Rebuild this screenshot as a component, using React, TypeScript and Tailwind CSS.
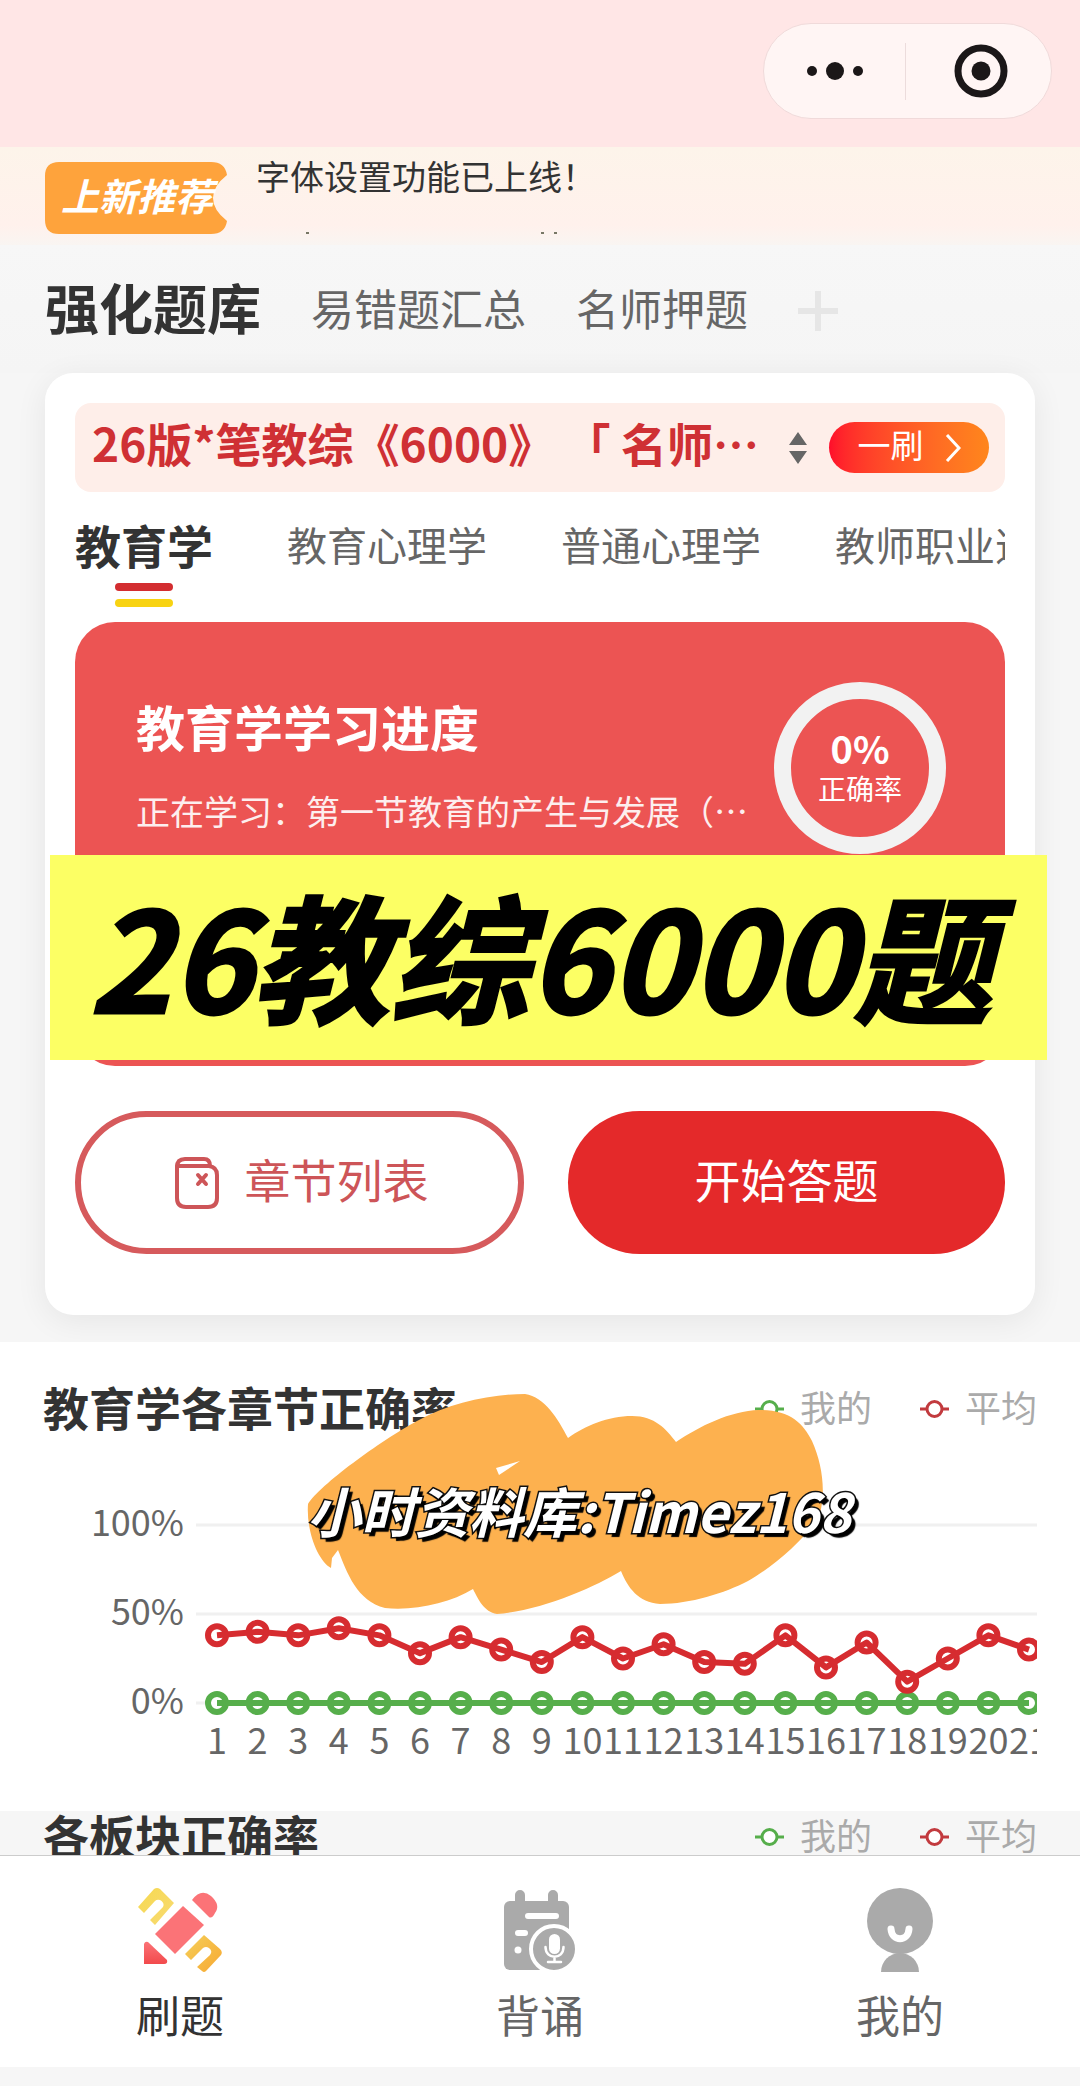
import { useState } from "react";

const bankTabs = ["强化题库", "易错题汇总", "名师押题"];
const subjects = ["教育学", "教育心理学", "普通心理学", "教师职业道德"];

// 平均正确率 (%)
const average = [
  38, 40, 38, 42, 38, 28, 37, 30, 23, 37, 25, 33, 23, 22, 38, 20, 34, 12, 25,
  38, 30,
];

const CHART_LEFT = 174;
const CHART_STEP = 40.6;
const CHART_ZERO = 264;

const pointX = (index: number) => CHART_LEFT + index * CHART_STEP;
const pointY = (value: number) => CHART_ZERO - value * 1.78;

const Series = ({ values, color }: { values: number[]; color: string }) => (
  <g stroke={color} strokeWidth={6} fill="none">
    {values.map((value, i) => (
      <circle key={i} cx={pointX(i)} cy={pointY(value)} r={9} fill="#fff" />
    ))}
    <polyline
      strokeLinejoin="round"
      points={values.map((value, i) => `${pointX(i)},${pointY(value)}`).join(" ")}
    />
  </g>
);

const AccuracyChart = () => (
  <svg className="block w-full h-[372px] mt-[10px]" role="img" aria-label="各章节正确率">
    {[100, 50, 0].map((tick) => (
      <g key={tick}>
        <line x1={153} x2="100%" y1={pointY(tick)} y2={pointY(tick)} stroke="#f0f0f0" strokeWidth={3} />
        <text x={141} y={pointY(tick) + 11} textAnchor="end" fontSize={36} fill="#666">
          {tick}%
        </text>
      </g>
    ))}
    <Series values={average.map(() => 0)} color="#56ae4b" />
    <Series values={average} color="#d62c30" />
    {average.map((_, i) => (
      <text key={i} x={pointX(i)} y={315} textAnchor="middle" fontSize={36} fill="#666">
        {i + 1}
      </text>
    ))}
  </svg>
);

const LegendItem = ({ label, color }: { label: string; color: string }) => (
  <span className="flex items-center gap-4">
    <svg width="29" height="26" fill="none" stroke={color} strokeWidth={3}>
      <path d="M0 16h6M23 16h6" />
      <circle cx="14.5" cy="16" r="7.5" fill="#fff" />
    </svg>
    {label}
  </span>
);

const SectionTitle = ({ title }: { title: string }) => (
  <div className="flex items-center justify-between h-[46px]">
    <h2 className="text-[46px] leading-[46px] font-bold text-[#333]">{title}</h2>
    <div className="flex gap-12 text-[36px] leading-[46px] text-[#aaa]">
      <LegendItem label="我的" color="#56ae4b" />
      <LegendItem label="平均" color="#c23a3e" />
    </div>
  </div>
);

const PracticeIcon = () => (
  <svg width="84" height="84" viewBox="138 1888 84 84">
    <defs>
      <linearGradient id="gold" x1="0" y1="0" x2="1" y2="1">
        <stop offset="0" stopColor="#f6d94f" />
        <stop offset="1" stopColor="#f8da74" />
      </linearGradient>
      <linearGradient id="amber" x1="0" y1="0" x2="1" y2="1">
        <stop offset="0" stopColor="#f5cf5a" />
        <stop offset="1" stopColor="#f7a832" />
      </linearGradient>
      <linearGradient id="tip" x1="0" y1="0" x2="0" y2="1">
        <stop offset="0" stopColor="#fb7377" />
        <stop offset="1" stopColor="#f24a4c" />
      </linearGradient>
    </defs>
    <path fill="url(#gold)" d="M138 1907L154 1889Q157 1887 160 1889L174 1903L155 1925L150 1920L163 1907Q165 1903 160 1900Q157 1899 155 1901L144 1913Z" />
    <path fill="url(#amber)" d="M185 1954L204 1935L220 1949Q223 1952 221 1955L206 1971Q204 1973 202 1971L197 1967L210 1955Q213 1951 209 1948Q206 1946 203 1948L191 1960Z" />
    <path fill="#fb7377" d="M183 1906L204 1925L175 1954L155 1934Z" />
    <path fill="#fb7377" d="M192 1900Q201 1888 211 1896Q221 1905 215 1913Q212 1919 209 1917Z" />
    <path fill="url(#tip)" d="M144 1944Q145 1941 148 1942L167 1960Q168 1964 164 1964H144Z" />
  </svg>
);

const ReciteIcon = () => (
  <svg width="84" height="84" viewBox="498 1888 84 84">
    <path stroke="#aaa" strokeWidth={10} strokeLinecap="round" d="M520 1895V1906M553 1895V1906" />
    <rect x="504" y="1901" width="65" height="69" rx="6" fill="#aaa" />
    <path stroke="#fff" strokeWidth={6} strokeLinecap="round" d="M528 1916H556M518 1933H525" />
    <circle cx="518" cy="1950" r="3.5" fill="#fff" />
    <circle cx="554" cy="1949" r="23" fill="#aaa" stroke="#fff" strokeWidth={4} />
    <rect x="549" y="1934" width="11" height="20" rx="5.5" fill="#fff" />
    <path fill="none" stroke="#fff" strokeWidth={2.5} strokeLinecap="round" d="M545.5 1947C545.5 1960 563.5 1960 563.5 1947M554.5 1957V1962M548 1962H561" />
  </svg>
);

const MineIcon = () => (
  <svg width="84" height="84" viewBox="858 1888 84 84">
    <circle cx="900" cy="1921" r="33" fill="#aaa" />
    <path fill="#aaa" d="M881 1972A19 19 0 0 1 919 1972Z" />
    <path fill="none" stroke="#fff" strokeWidth={7} strokeLinecap="round" d="M891 1929C892 1942 908 1942 909 1929" />
  </svg>
);

const navItems = [
  { label: "刷题", icon: <PracticeIcon />, color: "text-[#333]" },
  { label: "背诵", icon: <ReciteIcon />, color: "text-[#666]" },
  { label: "我的", icon: <MineIcon />, color: "text-[#666]" },
];

const App = () => {
  const [bank, setBank] = useState(0);
  const [subject, setSubject] = useState(0);

  return (
    <div
      lang="zh-CN"
      className="flex flex-col h-screen overflow-hidden bg-[#f6f6f6] font-['Noto_Sans_CJK_SC',sans-serif]"
    >
      <header className="shrink-0 flex justify-end items-start h-[147px] pt-[23px] pr-7 bg-[#ffe6e6]">
        <div className="flex items-center w-[289px] h-[96px] rounded-full border border-[#f0dada] bg-[#fff5f4]">
          <button aria-label="更多" className="flex-1 flex justify-center">
            <svg width="56" height="20" fill="#1b1718">
              <circle cx="5" cy="10" r="5" />
              <circle cx="28" cy="10" r="9" />
              <circle cx="51" cy="10" r="5" />
            </svg>
          </button>
          <span className="w-px h-[57px] bg-[#ecdcdc]" />
          <button aria-label="关闭" className="flex-1 flex justify-center pl-1">
            <svg width="54" height="54" fill="none" stroke="#1b1718">
              <circle cx="27" cy="27" r="23" strokeWidth={7} />
              <circle cx="27" cy="27" r="9.5" fill="#1b1718" stroke="none" />
            </svg>
          </button>
        </div>
      </header>

      <main className="flex-1 min-h-0 overflow-hidden">
        {/* 公告 */}
        <div className="flex items-start gap-[29px] h-[98px] px-[45px] pt-[15px] bg-linear-to-b from-[#fdf4ea] via-[#fff1ec] via-80% to-[#f9f5f2]">
          <div className="relative w-[182px] h-[72px]">
            <svg width="182" height="72" className="block">
              <path fill="#fea33c" d="M14 0H166Q180 0 182 13Q168 24 168 36Q168 48 182 59Q180 72 166 72H14Q0 72 0 58V14Q0 0 14 0Z" />
            </svg>
            <span className="absolute inset-0 pl-4 text-[38px] leading-[66px] font-bold italic text-white whitespace-nowrap">
              上新推荐
            </span>
          </div>
          <div className="text-[34px] leading-[28px] text-[#333]">
            <p>字体设置功能已上线！</p>
            <svg width="310" height="44" fill="#776">
              <path d="M50 42h3v2h-3zM285 42h3v2h-3zM298 42h3v2h-3z" />
            </svg>
          </div>
        </div>

        <div className="flex items-center h-[128px] px-[45px] pb-1 gap-[50px] bg-linear-to-b from-[#f7f7f7] to-[#f5f5f5]">
          {bankTabs.map((tab, i) => (
            <button
              key={tab}
              onClick={() => setBank(i)}
              className={
                bank === i
                  ? "text-[54px] leading-[64px] font-bold text-[#333]"
                  : "text-[43px] leading-[64px] text-[#666]"
              }
            >
              {tab}
            </button>
          ))}
          <button aria-label="添加">
            <svg width="40" height="48" stroke="#e6e6e6" strokeWidth={6}>
              <path d="M20 8V48M0 28H40" />
            </svg>
          </button>
        </div>

        <div className="px-[45px] pb-[27px]">
          <div className="relative px-[30px] pt-[30px] pb-[61px] rounded-[28px] bg-white shadow-[0_6px_32px_rgba(0,0,0,0.07)]">
            <div className="flex items-center h-[89px] pl-[17px] pr-4 rounded-2xl bg-[#feeee9]">
              <button className="flex-1 min-w-0 flex items-center justify-between pr-[22px]">
                <span className="pb-3 text-[46px] leading-[60px] font-bold text-[#cf3034] whitespace-nowrap">
                  26版*笔教综《6000》 「 名师…
                </span>
                <svg width="18" height="32" fill="#666">
                  <path d="M9 0L18 13H0ZM9 32L18 19H0Z" />
                </svg>
              </button>
              <button className="flex items-center justify-center gap-[21px] w-[160px] h-[51px] rounded-full bg-linear-to-r from-[#ff0b2b] to-[#ff861c] text-[33px] leading-[42px] text-white">
                <span className="pb-2">一刷</span>
                <svg width="16" height="28" fill="none" stroke="#fff" strokeWidth={3}>
                  <path d="M2 1L14 14L2 27" />
                </svg>
              </button>
            </div>

            <div className="flex items-start gap-[74px] h-[130px] pt-[22px] overflow-hidden">
              {subjects.map((name, i) => (
                <button
                  key={name}
                  onClick={() => setSubject(i)}
                  className="shrink-0 flex flex-col items-center"
                >
                  <span
                    className={
                      subject === i
                        ? "text-[46px] leading-[60px] font-bold text-[#333]"
                        : "text-[40px] leading-[60px] text-[#666]"
                    }
                  >
                    {name}
                  </span>
                  {subject === i && (
                    <>
                      <span className="mt-[9px] w-[58px] h-2 rounded-full bg-[#d32d30]" />
                      <span className="mt-2 w-[58px] h-2 rounded-full bg-[#f8d312]" />
                    </>
                  )}
                </button>
              ))}
            </div>

            <div className="flex items-start justify-between h-[444px] pl-[61px] pr-[59px] rounded-[40px] bg-[#ec5453] text-white">
              <div className="pt-[74px] whitespace-nowrap">
                <h1 className="text-[49px] leading-[60px] font-bold">教育学学习进度</h1>
                <p className="mt-[30px] text-[34px] leading-[50px] text-[#fdeeee]">
                  正在学习：第一节教育的产生与发展（…
                </p>
              </div>
              <div className="shrink-0 mt-[60px] flex flex-col items-center justify-center size-[172px] rounded-full border-[17px] border-[#f2f2f2]">
                <strong className="text-[38px] leading-[40px]">0%</strong>
                <span className="text-[28px] leading-[40px]">正确率</span>
              </div>
            </div>

            <div className="grid grid-cols-[449fr_437fr] gap-[44px] mt-[45px] h-[143px] text-[46px]">
              <button className="flex items-center justify-center gap-[26px] pl-1 rounded-full border-[6px] border-[#d65a5c] text-[#cd5558]">
                <svg width="44" height="52" viewBox="0 0 44 52" fill="none" stroke="#cd5558" strokeWidth={4} strokeLinecap="round">
                  <path d="M2 10Q2 2 10 2H29Q35 2 35 9" />
                  <path d="M2 9H34Q42 10 42 18V41Q42 50 33 50H11Q2 50 2 41V9" />
                  <path d="M23 18L31 27M31 18L23 27" />
                </svg>
                <span className="pb-2">章节列表</span>
              </button>
              <button className="pb-2 rounded-full bg-[#e4292a] text-white">开始答题</button>
            </div>

            <div className="absolute top-[482px] left-[5px] -right-3 flex items-center justify-center h-[205px] pb-2 pr-4 bg-[#fcff64] text-[138px] leading-[189px] font-bold italic text-black whitespace-nowrap [-webkit-text-stroke:3px_#000]">
              26教综6000题
            </div>
          </div>
        </div>

        <section className="relative px-[43px] pt-[41px] bg-white">
          <SectionTitle title="教育学各章节正确率" />
          <AccuracyChart />
          <div className="absolute top-[51px] left-[307px] w-[560px] h-[222px]">
            <svg width="520" height="222" viewBox="307 1392 520 222" className="block">
              <path
                fill="#fdb14f"
                d="M308 1503C320 1484 380 1440 417 1420C450 1402 490 1393 525 1393C545 1396 558 1418 568 1437C585 1425 608 1415 632 1415C655 1415 666 1428 676 1441C700 1425 730 1410 759 1409C790 1409 803 1422 812 1440C822 1462 826 1490 820 1512C812 1532 775 1565 748 1580C725 1592 690 1603 660 1603C638 1601 628 1587 621 1570C595 1586 540 1610 497 1613C484 1611 478 1598 473 1588C450 1602 415 1610 385 1607C357 1600 347 1572 338 1549L332 1557L331 1567C318 1560 306 1530 308 1503Z"
              />
              <path fill="#fff" d="M496 1467L520 1460L499 1474Z" />
            </svg>
            <span className="absolute inset-0 text-[54px] leading-[234px] font-bold italic text-white whitespace-nowrap [-webkit-text-stroke:3px_#111] [paint-order:stroke_fill] [text-shadow:4px_4px_1px_#000]">
              小时资料库:Timez168
            </span>
          </div>
        </section>

        <section className="px-[43px] bg-[#f6f6f6]">
          <SectionTitle title="各板块正确率" />
        </section>
      </main>

      <nav className="shrink-0 pb-[19px] border-t border-[#ccc] bg-[#f6f6f6]">
        <div className="grid grid-cols-3 h-[211px] pt-8 bg-white">
          {navItems.map((item) => (
            <a
              key={item.label}
              href="#"
              className={`flex flex-col items-center gap-3 text-[44px] leading-[60px] ${item.color}`}
            >
              {item.icon}
              {item.label}
            </a>
          ))}
        </div>
      </nav>
    </div>
  );
};

export default App;
